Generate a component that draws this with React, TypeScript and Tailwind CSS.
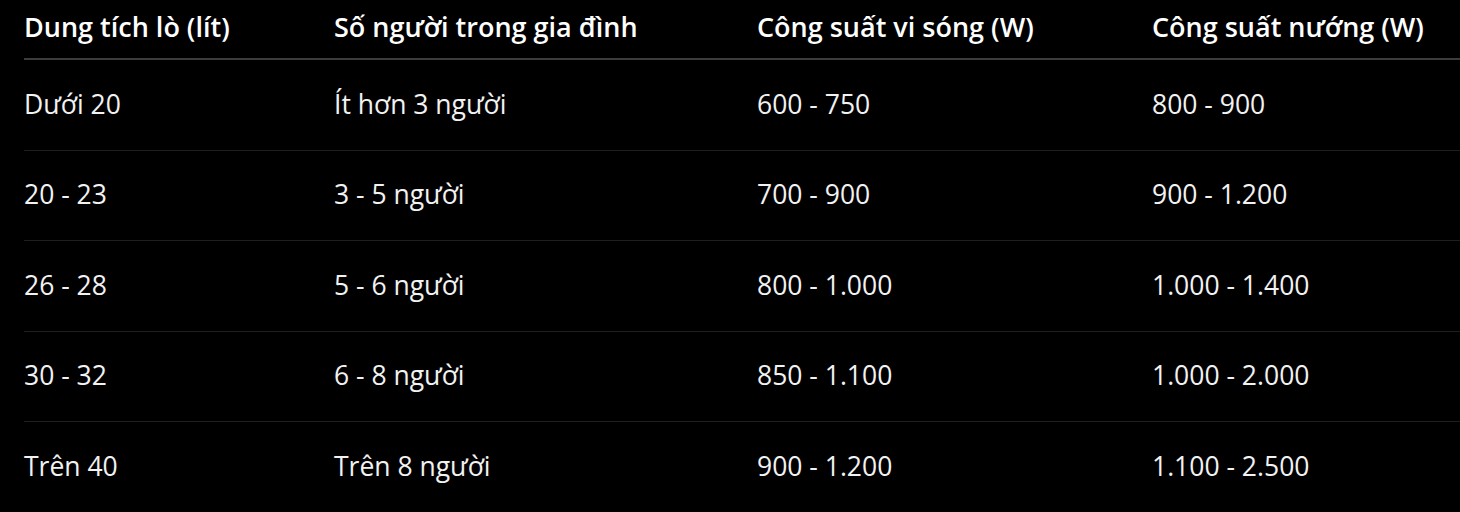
const headers = ['Dung tích lò (lít)', 'Số người trong gia đình', 'Công suất vi sóng (W)', 'Công suất nướng (W)'];

const rows = [
  ['Dưới 20', 'Ít hơn 3 người', '600 - 750', '800 - 900'],
  ['20 - 23', '3 - 5 người', '700 - 900', '900 - 1.200'],
  ['26 - 28', '5 - 6 người', '800 - 1.000', '1.000 - 1.400'],
  ['30 - 32', '6 - 8 người', '850 - 1.100', '1.000 - 2.000'],
  ['Trên 40', 'Trên 8 người', '900 - 1.200', '1.100 - 2.500'],
];

const cols = 'grid grid-cols-[310px_423px_395px_1fr]';

export default function App() {
  return (
    <div className="h-[512px] w-full overflow-hidden bg-black pl-6 font-['Open_Sans',sans-serif] text-white">
      <div className={`${cols} h-[60px] items-center border-b-2 border-[#3c3c3c] pb-1`}>
        {headers.map((h) => (
          <div key={h} className="text-[27px] font-semibold">
            {h}
          </div>
        ))}
      </div>
      {rows.map((r, i) => (
        <div
          key={i}
          className={`${cols} h-[90.5px] items-center border-b border-[#1e1e1e] text-[26.5px] text-[#f2f2f2]`}
        >
          {r.map((c, j) => (
            <div key={j}>{c}</div>
          ))}
        </div>
      ))}
    </div>
  );
}
